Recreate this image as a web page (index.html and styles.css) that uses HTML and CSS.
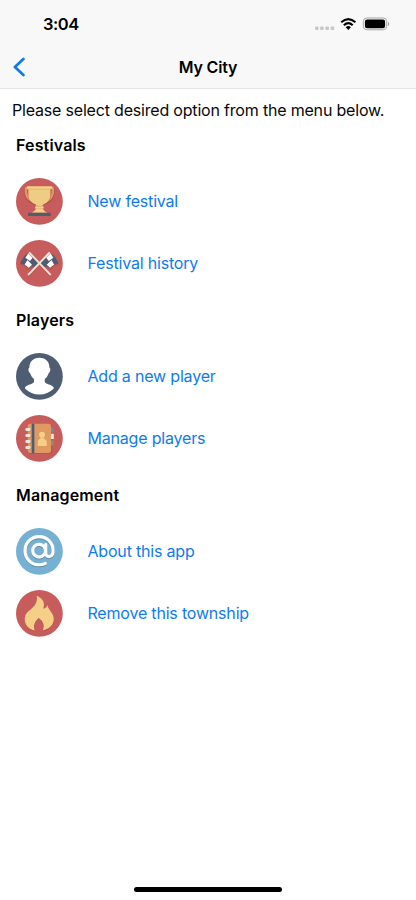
FILE: index.html
```html
<!DOCTYPE html>
<html lang="en">
<head>
<meta charset="utf-8">
<meta name="viewport" content="width=device-width, initial-scale=1">
<title>My City</title>
<link rel="stylesheet" href="styles.css">
</head>
<body>
<div class="screen">
  <header class="header">
    <div class="status">
      <span class="time">3:04</span>
      <svg class="indicators" width="76" height="16" viewBox="0 0 76 16">
        <g fill="#c7c7c9"><rect x="1" y="10.5" width="3.6" height="3.6" rx="1"/><rect x="6.1" y="10.5" width="3.6" height="3.6" rx="1"/><rect x="11.4" y="10.5" width="3.6" height="3.6" rx="1"/><rect x="16.6" y="10.5" width="3.6" height="3.6" rx="1"/></g>
        <g fill="none" stroke="#000" stroke-width="2.2"><path d="M27.2 6.3Q34.3-.2 41.4 6.3"/><path d="M29.9 9.2Q34.3 5.2 38.7 9.2"/></g>
        <path d="M31.7 11.2Q34.3 9 36.9 11.2L34.3 14Z"/>
        <rect x="49.3" y="2" width="23.4" height="11.8" rx="3.6" fill="none" stroke="#a6a6a7"/>
        <rect x="50.9" y="3.5" width="20.2" height="8.8" rx="2.2"/>
        <path d="M74 6v4q1.2-.6 1.2-2T74 6Z" fill="#9b9b9c"/>
      </svg>
    </div>
    <div class="nav">
      <svg class="back" width="14" height="20" viewBox="0 0 14 20"><path d="M11.4 1.9 2.9 10l8.5 8.1" fill="none" stroke="#1079ee" stroke-width="2.7" stroke-linecap="round" stroke-linejoin="round"/></svg>
      <h1 class="title">My City</h1>
    </div>
  </header>
  <main class="content">
    <p class="intro">Please select desired option from the menu below.</p>
    <section class="group">
      <h2 class="group-title">Festivals</h2>
      <a class="row">
        <svg class="icon" viewBox="24 24 140 140">
          <circle cx="94" cy="94" r="70" fill="#c75c5c"/>
          <path d="M63 56H52q-3 20 10 34 8 6 18 7M125 56h11q3 20-10 34-8 6-18 7" fill="none" stroke="#994848" stroke-width="6" opacity=".45" transform="translate(0 3)"/>
          <path d="M64 55H54q-3 18 8 31 7 7 16 8M124 55h10q3 18-8 31-7 7-16 8" fill="none" stroke="#e0995e" stroke-width="7"/>
          <path d="M60 54h68v24q-2 20-23 29H83Q62 98 60 78Z" fill="#994848" opacity=".4"/>
          <path d="M61 53h66v23q-2 20-23 28v4H84v-4Q63 96 61 76Z" fill="#f0cb83"/>
          <rect x="56" y="49" width="77" height="7" rx="3" fill="#f5cf87"/>
          <path d="M61 56h66v3H61ZM83 106h22v4H83Z" fill="#e0b871"/>
          <rect x="81" y="109" width="26" height="7" rx="3" fill="#f5cf87"/>
          <path d="M84 116h20q2 6 14 12H70q12-6 14-12Z" fill="#f5cf87"/>
          <rect x="60" y="128" width="68" height="10" rx="1" fill="#4f5d73"/>
        </svg>
        <span class="label">New festival</span>
      </a>
      <a class="row">
        <svg class="icon" viewBox="24 24 140 140">
          <circle cx="94" cy="94" r="70" fill="#c75c5c"/>
          <g id="flag">
            <path d="m62 68-13 8-13 21 14 5 10 12 12-7 12 1 8-14Z" fill="#994848" opacity=".4"/>
            <path d="m61 64-12 7-13 23 14 3 9 10 12-4 13 0 6-12Z" fill="#4f5d73"/>
            <path d="m61 64 13 12-8 11-14-10ZM50 97l8-13 14 14-10 9Z" fill="#fff"/>
            <path d="m76 79 11 11-7 10-12-12Z" fill="#4f5d73"/>
          </g>
          <use href="#flag" transform="translate(188 0) scale(-1 1)"/>
          <path d="m65 65 61 65M123 65l-61 65" stroke="#994848" stroke-opacity=".35" stroke-width="6" stroke-linecap="round"/>
          <path d="m65 63 61 64" stroke="#e8dfce" stroke-width="6" stroke-linecap="round"/>
          <path d="m123 63-61 64" stroke="#eee6d8" stroke-width="6" stroke-linecap="round"/>
        </svg>
        <span class="label">Festival history</span>
      </a>
    </section>
    <section class="group">
      <h2 class="group-title">Players</h2>
      <a class="row">
        <svg class="icon" viewBox="24 24 140 140">
          <circle cx="94" cy="94" r="70" fill="#4f5d73"/>
          <path d="M94 38c20 0 30 13 30 30 4 0 4 12-2 16-3 9-7 14-12 18v8c2 9 29 9 27 20q-18 18-43 18t-43-18c-2-11 25-11 27-20v-8c-5-4-9-9-12-18-6-4-6-16-2-16 0-17 10-30 30-30Z" fill="#fff"/>
        </svg>
        <span class="label">Add a new player</span>
      </a>
      <a class="row">
        <svg class="icon" viewBox="24 24 140 140">
          <circle cx="94" cy="94" r="70" fill="#c75c5c"/>
          <rect x="59" y="53" width="74" height="88" rx="7" fill="#994848" opacity=".4"/>
          <rect x="122" y="61" width="15" height="15" rx="2" fill="#7c869a"/>
          <rect x="122" y="80" width="15" height="16" rx="2" fill="#f3eee5"/>
          <rect x="122" y="100" width="15" height="15" rx="2" fill="#809669"/>
          <rect x="59" y="50" width="70" height="88" rx="7" fill="#e0995e"/>
          <path d="M71 50h8v88h-8Z" fill="#4f5d73"/>
          <g fill="#a77348"><circle cx="66" cy="69" r="4"/><circle cx="66" cy="87" r="4"/><circle cx="66" cy="105" r="4"/><circle cx="66" cy="123" r="4"/></g>
          <g fill="#eee6d8"><rect x="52" y="63" width="16" height="9" rx="4"/><rect x="52" y="81" width="16" height="9" rx="4"/><rect x="52" y="99" width="16" height="9" rx="4"/><rect x="52" y="117" width="16" height="9" rx="4"/></g>
          <circle cx="102" cy="83" r="9" fill="#f5cf87"/>
          <path d="M97 91h10v4q9 2 9 11v11H89v-11q0-9 8-11Z" fill="#f5cf87"/>
        </svg>
        <span class="label">Manage players</span>
      </a>
    </section>
    <section class="group">
      <h2 class="group-title">Management</h2>
      <a class="row">
        <svg class="icon" viewBox="24 24 140 140">
          <circle cx="94" cy="94" r="70" fill="#76b1d3"/>
          <g fill="none" stroke-width="9.5" stroke-linecap="round">
            <g stroke="#5b8ba8" transform="translate(0 3)"><circle cx="93" cy="92" r="19"/><path d="M113 73v26c0 15 22 15 22-7 0-24-19-42-42-42S51 68 51 92s19 42 42 42q11 0 19-4"/></g>
            <g stroke="#fff"><circle cx="93" cy="92" r="19"/><path d="M113 73v26c0 15 22 15 22-7 0-24-19-42-42-42S51 68 51 92s19 42 42 42q11 0 19-4"/></g>
          </g>
        </svg>
        <span class="label">About this app</span>
      </a>
      <a class="row">
        <svg class="icon" viewBox="24 24 140 140">
          <circle cx="94" cy="94" r="70" fill="#c75c5c"/>
          <path d="M86 41c22 10 24 23 20 39 6-1 11-6 12-12 0 13 19 24 19 43 0 17-13 30-33 34 6-13 3-26-12-37-13 11-17 24-12 37-18-3-30-18-30-33 0-21 15-26 27-39 9-9 11-20 9-32Z" fill="#994848" opacity=".5" transform="translate(0 3)"/>
          <path d="M86 41c22 10 24 23 20 39 6-1 11-6 12-12 0 13 19 24 19 43 0 17-13 30-33 34 6-13 3-26-12-37-13 11-17 24-12 37-18-3-30-18-30-33 0-21 15-26 27-39 9-9 11-20 9-32Z" fill="#f5cf87"/>
        </svg>
        <span class="label">Remove this township</span>
      </a>
    </section>
  </main>
  <div class="home-bar"></div>
</div>
</body>
</html>
```
FILE: styles.css
```css
* { box-sizing: border-box; }
body { margin: 0; background: #fff; color: #080808; font-family: Inter, sans-serif; font-size: 16px; letter-spacing: -.19px; }
.screen { width: 416px; height: 900px; display: flex; flex-direction: column; overflow: hidden; }
.header { height: 89px; background: #f8f8f8; border-bottom: 1px solid #e5e5e5; }
.status { height: 46px; padding: 2px 26px 0 43px; display: flex; align-items: center; justify-content: space-between; }
.time { font-size: 16.5px; font-weight: 600; letter-spacing: -.5px; color: #000; }
.nav { height: 42px; padding: 0 12px; display: grid; grid-template-columns: 14px 1fr 14px; align-items: center; }
.back { display: block; }
.title { margin: 0 0 1px; font-size: 16px; font-weight: 600; text-align: center; color: #000; }
.content { flex: 1; padding: 9px 12px 0; }
.intro { margin: 0; height: 34px; line-height: 25px; white-space: nowrap; }
.group { height: 174.8px; padding-left: 4px; }
.group-title { margin: 0 0 12.2px; height: 26px; line-height: 26px; font-size: 16px; font-weight: 640; letter-spacing: .15px; color: #000; }
.row { height: 62.3px; display: flex; align-items: center; gap: 25px; color: #0f7bee; }
.icon { width: 46.8px; height: 46.8px; flex: none; margin-left: -.3px; overflow: visible; }
.label { white-space: nowrap; margin-bottom: .4px; }
.home-bar { width: 148px; height: 5px; margin: 0 auto 8px; border-radius: 3px; background: #000; }
```
